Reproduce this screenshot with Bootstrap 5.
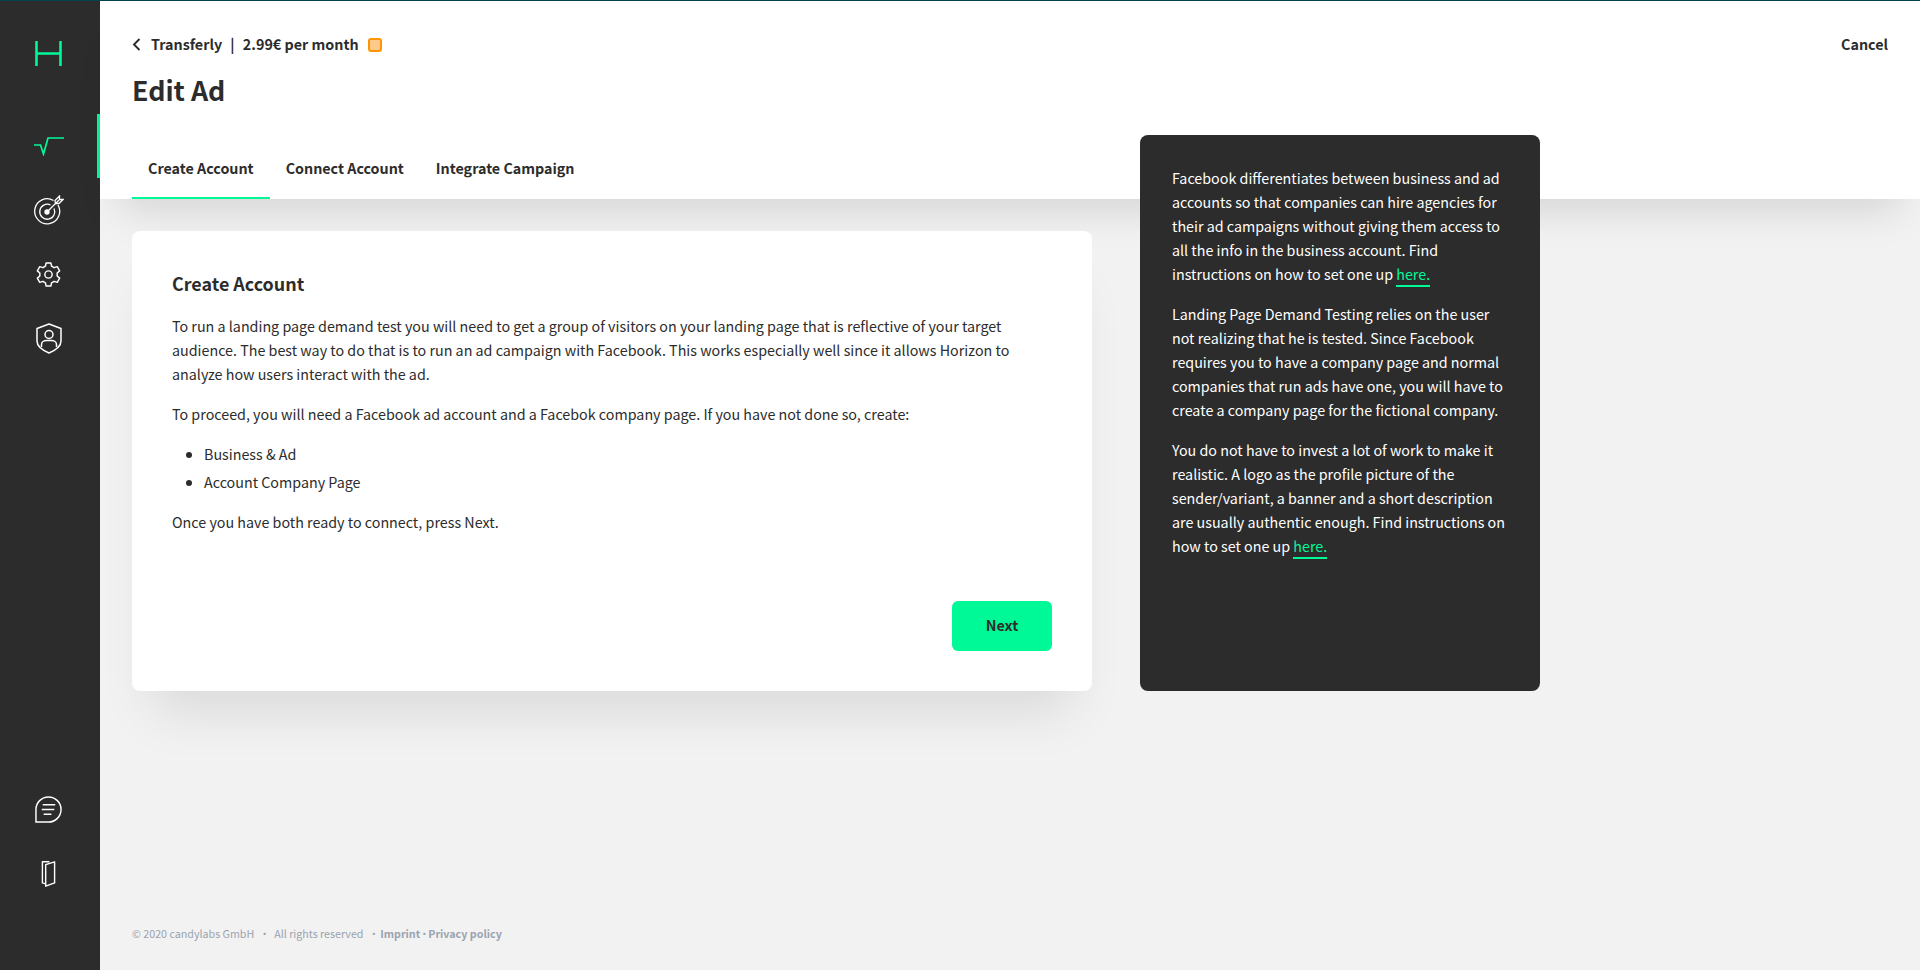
<!DOCTYPE html>
<html lang="en">
<head>
<meta charset="utf-8">
<title>Edit Ad</title>
<link href="https://cdn.jsdelivr.net/npm/bootstrap@5.3.0/dist/css/bootstrap.min.css" rel="stylesheet">
<style>
html,body{height:100%;margin:0}
body{font-family:"Noto Sans CJK SC","Noto Sans",sans-serif;font-size:14.3px;line-height:24px;color:#2c2c2c;background:#f2f2f2;overflow:hidden}
.shell{height:970px;border-top:1px solid #00444f;position:relative}
.rail{width:100px;background:#2c2c2c;flex:none;position:relative}
.rail-logo{height:113px;padding:40px 3px 0 0}
.rail-item{height:64px;position:relative;padding-right:3px}
.rail-item.on::after{content:"";position:absolute;right:0;top:0;width:3px;height:64px;background:#00f997}
.rail-bottom{margin-top:auto;padding-bottom:64px}
.chat-glyph{margin-bottom:2px}
.main-col{min-width:0}
.topbar{height:198px;background:#fff;box-shadow:0 30px 40px -20px rgba(0,0,0,.13);padding:0 32px;position:relative}
.crumb{font-weight:700;padding-top:31px;height:71px}
.crumb-sep{margin:0 8.500px 0 8px}
.crumb-tag{width:14px;height:14px;border:2px solid #ff9500;background:#ffc98c;border-radius:3px;display:inline-block;margin:6px 0 0 9px}
.cancel-link{position:absolute;right:32px;top:31px;font-weight:700;color:#2c2c2c;text-decoration:none}
.page-title{font-size:26.800px;line-height:36px;font-weight:700;margin:0}
.tabs-row{margin-top:28px;height:63px}
.tab-link{font-weight:700;color:#2c2c2c;text-decoration:none;padding:2px 16px 0;height:63px;display:flex;align-items:center;border-bottom:2px solid transparent}
.tab-link.on{border-bottom-color:#00f997}
.body-zone{padding:32px;position:relative;flex:1}
.info-card{width:960px;height:460px;background:#fff;border-radius:8px;box-shadow:0 40px 50px -20px rgba(0,0,0,.1);padding:39px 40px 40px;position:relative}
.info-card h2{font-size:17.900px;line-height:26px;font-weight:700;margin:0 0 18px}
.info-card p{margin:0 0 16px}
.info-card ul{margin:0 0 16px;padding-left:32px}
.info-card li{margin-bottom:4px}
.next-btn{position:absolute;right:40px;bottom:40px;width:100px;height:50px;background:#00f997;border:0;border-radius:6px;font-weight:700;color:#2c2c2c;line-height:48px;padding:0 0 2px}
.dark-panel{position:absolute;left:1140px;top:134px;width:400px;height:556px;background:#2c2c2c;color:#fff;border-radius:8px;padding:31px 32px;z-index:3}
.dark-panel p{margin:0 0 16px}
.dark-panel a{color:#00f997;text-decoration:none;display:inline-block;line-height:21px;margin-bottom:-1px;border-bottom:2px solid #00f997;padding-bottom:1px}
.foot-line{position:absolute;left:132px;top:923px;font-size:10.700px;line-height:20px;color:#9aa3af}
.foot-line a{color:#9aa3af;font-weight:700;text-decoration:none}
.foot-gap{margin:0 4.300px 0 5px}
.foot-dot{margin:0 1px 0 2.700px}
.foot-dot2{margin:0 -1.300px}
</style>
</head>
<body>
<div class="shell d-flex">
  <nav class="rail d-flex flex-column">
    <div class="rail-logo d-flex justify-content-center">
      <svg width="27" height="25" viewBox="0 0 27 25" fill="none" stroke="#00f997" stroke-width="2.600"><path d="M1.500 0V25M25.500 0V25M1.500 12.500H25.500"/></svg>
    </div>
    <div class="rail-item on d-flex align-items-center justify-content-center">
      <svg width="30" height="19" viewBox="0 0 30 19" fill="none" stroke="#00f997" stroke-width="1.700"><path d="M0 8H6.500L9.500 17L14 1H30"/></svg>
    </div>
    <div class="rail-item d-flex align-items-center justify-content-center">
      <svg width="30" height="30" viewBox="0 0 30 30" fill="none" stroke="#fff" stroke-width="1.300"><path d="M19.500 5.500A12.500 12.500 0 1 0 24 10"/><path d="M16.500 10A7.500 7.500 0 1 0 20 13.500"/><circle cx="13" cy="17" r="2" fill="#fff"/><path d="M13 17L25 5M21 5.500L25.500 1L25.500 4.500L29 4.500L25 8.500H21.500Z"/></svg>
    </div>
    <div class="rail-item d-flex align-items-center justify-content-center">
      <svg width="25" height="25" viewBox="0 0 26 26" fill="none" stroke="#fff" stroke-width="1.500" stroke-linejoin="round"><path d="M10.500 1H15.500L16.200 4.400L18.800 5.900L22.100 4.800L24.600 9.200L22 11.500V14.500L24.600 16.800L22.100 21.200L18.800 20.100L16.200 21.600L15.500 25H10.500L9.800 21.600L7.200 20.100L3.900 21.200L1.400 16.800L4 14.500V11.500L1.400 9.200L3.900 4.800L7.200 5.900L9.800 4.400Z"/><circle cx="13" cy="13" r="3.800"/></svg>
    </div>
    <div class="rail-item d-flex align-items-center justify-content-center">
      <svg width="26" height="31" viewBox="0 0 26 31" fill="none" stroke="#fff" stroke-width="1.500" stroke-linejoin="round"><path d="M13 1L25 5.500V18C25 23 19 27.500 13 30C7 27.500 1 23 1 18V5.500Z"/><circle cx="13" cy="11.500" r="4"/><path d="M5.500 24V21.500C5.500 19 8 17.500 10.500 17.500H15.500C18 17.500 20.500 19 20.500 21.500V24"/></svg>
    </div>
    <div class="rail-bottom d-flex flex-column">
      <div class="rail-item d-flex align-items-center justify-content-center">
        <svg class="chat-glyph" width="27" height="27" viewBox="0 0 28 28" fill="none" stroke="#fff" stroke-width="1.500"><path d="M1 27V14A13 13 0 1 1 14 27Z"/><path d="M8 9H21M7 14H20M9 19H17"/></svg>
      </div>
      <div class="rail-item d-flex align-items-center justify-content-center">
        <svg width="15" height="28" viewBox="0 0 16 28" fill="none" stroke="#fff" stroke-width="1.500" stroke-linejoin="round"><path d="M9 1H1.500V23.500L5 24.500"/><path d="M5 4L14.500 1V23.500L5 27Z"/></svg>
      </div>
    </div>
  </nav>
  <div class="main-col flex-grow-1 d-flex flex-column">
    <header class="topbar">
      <div class="crumb d-flex align-items-start">
        <svg width="19" height="24" viewBox="0 0 19 24" fill="none" stroke="#2c2c2c" stroke-width="1.900"><path d="M7.500 7L2 12.500L7.500 18"/></svg>
        <span>Transferly<span class="crumb-sep">|</span>2.99€ per month</span>
        <span class="crumb-tag"></span>
      </div>
      <a class="cancel-link" href="#">Cancel</a>
      <h1 class="page-title">Edit Ad</h1>
      <div class="tabs-row d-flex">
        <a class="tab-link on" href="#">Create Account</a>
        <a class="tab-link" href="#">Connect Account</a>
        <a class="tab-link" href="#">Integrate Campaign</a>
      </div>
    </header>
    <main class="body-zone">
      <section class="info-card">
        <h2>Create Account</h2>
        <p>To run a landing page demand test you will need to get a group of visitors on your landing page that is reflective of your target audience. The best way to do that is to run an ad campaign with Facebook. This works especially well since it allows Horizon to analyze how users interact with the ad.</p>
        <p>To proceed, you will need a Facebook ad account and a Facebok company page. If you have not done so, create:</p>
        <ul>
          <li>Business &amp; Ad</li>
          <li>Account Company Page</li>
        </ul>
        <p>Once you have both ready to connect, press Next.</p>
        <button class="next-btn" type="button">Next</button>
      </section>
    </main>
  </div>
  <aside class="dark-panel">
    <p>Facebook differentiates between business and ad accounts so that companies can hire agencies for their ad campaigns without giving them access to all the info in the business account. Find instructions on how to set one up <a href="#">here.</a></p>
    <p>Landing Page Demand Testing relies on the user not realizing that he is tested. Since Facebook requires you to have a company page and normal companies that run ads have one, you will have to create a company page for the fictional company.</p>
    <p>You do not have to invest a lot of work to make it realistic. A logo as the profile picture of the sender/variant, a banner and a short description are usually authentic enough. Find instructions on how to set one up <a href="#">here.</a></p>
  </aside>
  <footer class="foot-line">© 2020 candylabs GmbH<span class="foot-gap">·</span>All rights reserved <span class="foot-dot">·</span><a href="#">Imprint</a><span class="foot-dot2">·</span><a href="#">Privacy policy</a></footer>
</div>
<script src="https://cdn.jsdelivr.net/npm/bootstrap@5.3.0/dist/js/bootstrap.bundle.min.js"></script>
</body>
</html>
